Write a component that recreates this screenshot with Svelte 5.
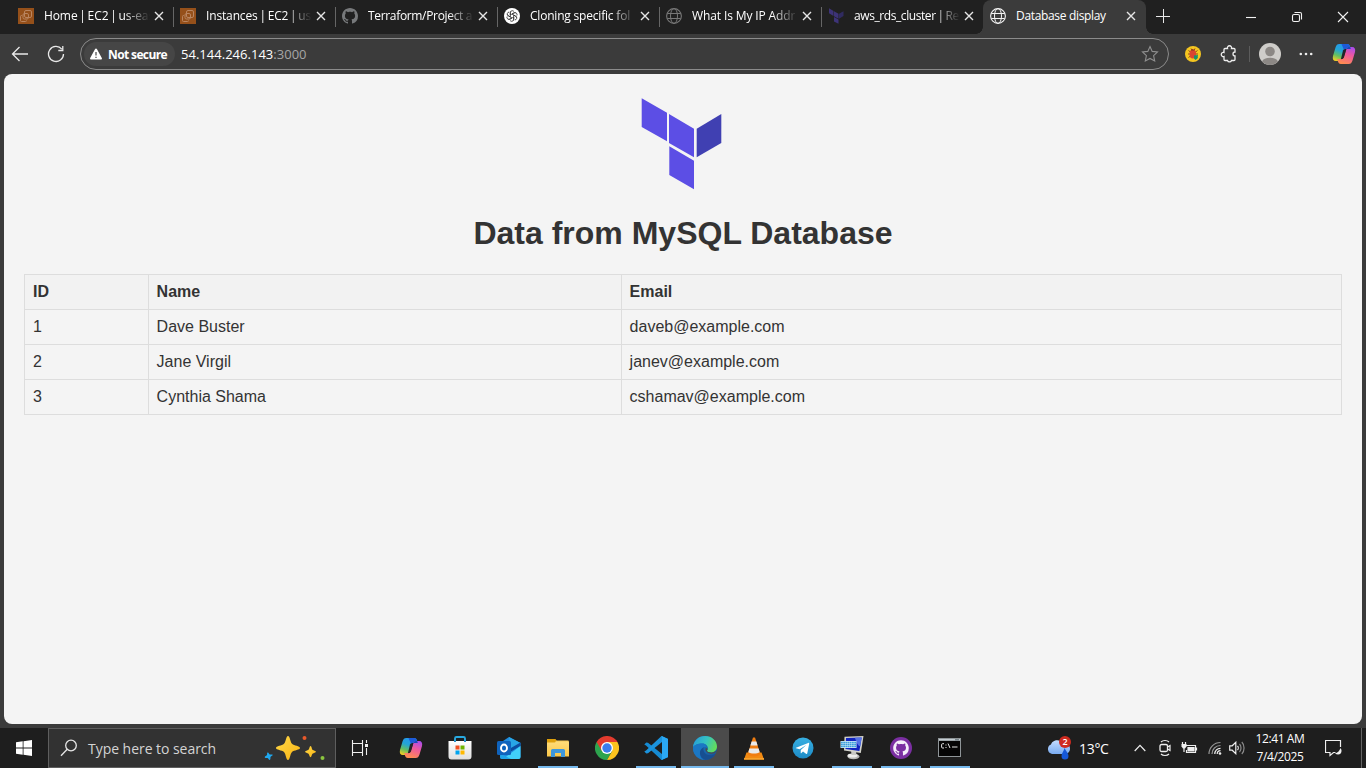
<script>
  const tabs = [
    { icon: 'aws', parts: ['Home', 'EC2', 'us-eas'], spacing: -0.1 },
    { icon: 'aws', parts: ['Instances', 'EC2', 'us-'], spacing: -0.15 },
    { icon: 'github', parts: ['Terraform/Project a'], spacing: -0.33 },
    { icon: 'openai', parts: ['Cloning specific fol'], spacing: -0.2 },
    { icon: 'globe', parts: ['What Is My IP Addr'], spacing: -0.12 },
    { icon: 'terraform', parts: ['aws_rds_cluster', 'Re'], spacing: -0.42 },
    { icon: 'globe', parts: ['Database display'], active: true, spacing: -0.33 }
  ];

  const rows = [
    { id: 1, name: 'Dave Buster', email: 'daveb@example.com' },
    { id: 2, name: 'Jane Virgil', email: 'janev@example.com' },
    { id: 3, name: 'Cynthia Shama', email: 'cshamav@example.com' }
  ];

  const apps = [
    { icon: 'copilot' },
    { icon: 'store' },
    { icon: 'outlook' },
    { icon: 'explorer', open: true },
    { icon: 'chrome' },
    { icon: 'code', open: true },
    { icon: 'edge', open: true, current: true },
    { icon: 'vlc', open: true },
    { icon: 'telegram' },
    { icon: 'remote', open: true },
    { icon: 'githubdesk', open: true },
    { icon: 'terminal', open: true }
  ];

  const octocat =
    'M8 0C3.58 0 0 3.58 0 8c0 3.54 2.29 6.53 5.47 7.59.4.07.55-.17.55-.38 0-.19-.01-.82-.01-1.49-2.01.37-2.53-.49-2.69-.94-.09-.23-.48-.94-.82-1.13-.28-.15-.68-.52-.01-.53.63-.01 1.08.58 1.23.82.72 1.21 1.87.87 2.33.66.07-.52.28-.87.51-1.07-1.78-.2-3.64-.89-3.64-3.95 0-.87.31-1.59.82-2.15-.08-.2-.36-1.02.08-2.12 0 0 .67-.21 2.2.82.64-.18 1.32-.27 2-.27.68 0 1.36.09 2 .27 1.53-1.04 2.2-.82 2.2-.82.44 1.1.16 1.92.08 2.12.51.56.82 1.27.82 2.15 0 3.07-1.87 3.75-3.65 3.95.29.25.54.73.54 1.48 0 1.07-.01 1.93-.01 2.2 0 .21.15.46.55.38A8.013 8.013 0 0016 8c0-4.42-3.58-8-8-8z';
</script>

{#snippet copilot(size)}
  <svg width={size} height={size} viewBox="0 0 24 24">
    <path d="M7.300 2h7.900c1.700 0 2.300 1 2.800 2.500l.8 2.500h-4c-1.700 0-2.300.7-2.800 2.200L9.800 16c-.7 2-1.500 3-3.300 3H4C1.300 19 .3 17 1 14l2.500-8.500C4.300 3 5.300 2 7.300 2z" fill="url(#cpA)" />
    <path d="M9.500 2h5.700c1.700 0 2.300 1 2.800 2.500l.8 2.500h-3.600c-1.500 0-2.300.3-3 1.400z" fill="#1d5bd9" />
    <path d="M16.700 22H8.800c-1.700 0-2.300-1-2.800-2.500L5.200 17h3.600c1.900 0 2.600-.8 3.200-2.500l2.100-6.700C14.800 5.800 15.500 5 17.300 5H20c2.700 0 3.700 2 3 5l-2.500 8.500c-.8 2.500-1.800 3.500-3.800 3.500z" fill="url(#cpB)" />
    <path d="M14.500 6.700C15.500 4.800 16.800 5 18.200 5l.6 2h-4.500z" fill="#174cb8" />
    <path d="M11 8.500c.6-1 1.500-1.500 3.400-1.500L12 15.300c-.5 1.300-1.300 1.900-3.100 1.900z" fill="#222428" />
  </svg>
{/snippet}

{#snippet icon(name)}
  {#if name === 'aws'}
    <svg width="16" height="16" viewBox="0 0 16 16">
      <rect width="16" height="16" fill="#95501a" />
      <g fill="none" stroke="#b98560" stroke-width="1">
        <rect x="6.500" y="2.500" width="7" height="7" rx="1.500" />
        <rect x="5" y="5.500" width="5.500" height="5.500" rx="1.500" />
        <path d="M4 7.500h-.5a1 1 0 0 0-1 1v4a1 1 0 0 0 1 1h4a1 1 0 0 0 1-1" />
      </g>
    </svg>
  {:else if name === 'github'}
    <svg width="16" height="16" viewBox="0 0 16 16"><path d={octocat} fill="#77797b" /></svg>
  {:else if name === 'openai'}
    <svg width="16" height="16" viewBox="0 0 16 16">
      <circle cx="8" cy="8" r="8" fill="#fff" />
      <g fill="none" stroke="#303030" stroke-width=".75">
        {#each [0, 60, 120, 180, 240, 300] as a}
          <path d="M6.300 7V4.700a2 2 0 0 1 3.700-1.100M6.300 7L10 4.900a2 2 0 0 1 1.700 0" transform="rotate({a} 8 8)" />
        {/each}
      </g>
    </svg>
  {:else if name === 'globe'}
    <svg class="globe" width="16" height="16" viewBox="0 0 16 16" fill="none" stroke="currentColor">
      <circle cx="8" cy="8" r="7.400" stroke-width="1.100" />
      <ellipse cx="8" cy="8" rx="3.500" ry="7.400" />
      <path d="M1.300 5.500h13.400M1.300 10.500h13.400" />
    </svg>
  {:else if name === 'terraform'}
    <svg width="16" height="16" viewBox="0 0 16 16" fill="#3d3378">
      <path d="M1 .3l4.500 2.600v5L1 5.300zM6 3.200l4.500 2.600v5L6 8.200zM6 8.900l4.500 2.600v4.300L6 13.500z" />
      <path d="M11 5.800l4.500-2.600v4.900L11 10.700z" fill="#302b60" />
    </svg>
  {:else if name === 'copilot'}
    {@render copilot(24)}
  {:else if name === 'store'}
    <svg width="24" height="24" viewBox="0 0 24 24">
      <path d="M7 5V2.500A1.500 1.500 0 0 1 8.500 1h7A1.500 1.500 0 0 1 17 2.500V5" fill="none" stroke="#28a9e0" stroke-width="1.900" />
      <path d="M.5 5h23v15.500a3 3 0 0 1-3 3h-17a3 3 0 0 1-3-3z" fill="url(#storeG)" />
      <path d="M6.100 5h1.800v1H6.100zM16.100 5h1.800v1h-1.800z" fill="#1683c4" />
      <path d="M7.500 9.500h4V13.500h-4z" fill="#f25022" /><path d="M12.500 9.500h4v4h-4z" fill="#6fb400" />
      <path d="M7.500 14.500h4v4h-4z" fill="#00a4ef" /><path d="M12.500 14.500h4v4h-4z" fill="#ffb900" />
    </svg>
  {:else if name === 'outlook'}
    <svg width="26" height="24" viewBox="0 0 26 24">
      <path d="M4 7L13 1l11.500 6v14a2 2 0 0 1-2 2H6a2 2 0 0 1-2-2z" fill="#1f8ce0" />
      <path d="M13 1l11.500 6L15 13z" fill="#28a6e6" />
      <path d="M24.500 6.500V10L14 16v-3.500z" fill="#0b4da0" />
      <path d="M24.500 10v11a2 2 0 0 1-2 2H7z" fill="#41d0fa" />
      <path d="M5 18l10 5H6a2 2 0 0 1-2-2z" fill="#20a4e8" />
      <rect x="1" y="5" width="14" height="14" rx="1.500" fill="#0f63bd" />
      <ellipse cx="8" cy="12" rx="3" ry="3.500" fill="none" stroke="#fff" stroke-width="1.900" />
    </svg>
  {:else if name === 'explorer'}
    <svg width="24" height="24" viewBox="0 0 24 24">
      <path d="M1 3h8.500l1.500 2H22.500v6H1z" fill="#dfa00c" />
      <path d="M10.500 4.500h12v2h-14z" fill="#f4c653" />
      <path d="M1 6.500h8l1.500-1H23V20.500H1z" fill="url(#folderG)" />
      <path d="M5 21v-6.500a1.500 1.500 0 0 1 1.500-1.500h11a1.500 1.500 0 0 1 1.500 1.500V21h-4v-4H9v4z" fill="#3e97db" />
    </svg>
  {:else if name === 'chrome'}
    <svg width="24" height="24" viewBox="0 0 24 24">
      <path d="M1.600 6A12 12 0 0 1 22.400 6H12z" fill="#e33b2e" />
      <path d="M1.600 6A12 12 0 0 0 12 24l5.200-9L12 12z" fill="#2da44e" />
      <path d="M22.400 6A12 12 0 0 1 12 24l5.200-9L12 6z" fill="#fcc31e" />
      <path d="M1.600 6L6.800 15 12 12V6h10.400L21 4z" fill="#e33b2e" />
      <circle cx="12" cy="12" r="6" fill="#fff" /><circle cx="12" cy="12" r="4.700" fill="#3b7ded" />
    </svg>
  {:else if name === 'code'}
    <svg width="24" height="24" viewBox="0 0 24 24">
      <path d="M17.500 0L24 3v18l-6.500 3L2 9.500l-1.700-1 2-2L4 6.800l14 11.200V6z" fill="#168bd3" />
      <path d="M17.500 24L24 21V3l-6.500-3L2 14.500l-1.700 1 2 2 1.700-.3L18 6v12z" fill="#1b93dd" />
      <path d="M17.500 0L24 3v18l-6.500 3c.3-.3.500-.8.500-1.300V1.300c0-.5-.2-1-.5-1.300z" fill="#2ba8f3" />
    </svg>
  {:else if name === 'edge'}
    <svg width="24" height="24" viewBox="0 0 24 24">
      <circle cx="12" cy="12" r="12" fill="url(#edgeB)" />
      <path d="M0 11.500C.4 4.800 5.500 0 12 0c7 0 12 4.900 12 10.500 0 3.500-2.600 6-6 6-2.300 0-4-.8-4-1.700 0-.6.900-.9.900-2.500 0-2.600-2.200-4.800-5.400-4.800C5 7.500 1 9 0 11.500z" fill="url(#edgeG)" />
      <path d="M9.500 7.500C5 7.500 1 9 0 11.500v1.300C.3 19 5.500 24 12 24c-3.500-.5-5.500-4-5-7.500.4-2.700 1.500-4.500 3.800-5.300.8-.3 2-.3 2.900.3-.4-2.300-1.800-4-4.200-4z" fill="#1b77c4" />
      <path d="M10.800 11.200C8 12.500 6.600 15 7 17.500 7.700 21.500 10.500 24 14 23.800c3.500-.5 6-2.200 7.800-4.700.4-.7-.2-1-.7-.7-4.500 2.300-9.100.1-10.300-3.200-.5-1.300-.5-2.800 0-4z" fill="#174f91" />
      <path d="M13 12c-.8 1-.6 2.500.3 3.600 1.200 1.500 3.200 2.100 5.200 2.100 2 0 4-.9 5.100-3l-1.400.8c-2.700 1.700-8.200.8-8.200-.7 0-.6.500-.9.500-2z" fill="#4b4b4b" />
    </svg>
  {:else if name === 'vlc'}
    <svg width="24" height="24" viewBox="0 0 24 24">
      <path d="M4.500 16.500h15L22 23.500H2z" fill="#f28a12" />
      <path d="M11 1.500h2l5.500 17c-3 2.500-10 2.500-13 0z" fill="#f07d10" />
      <path d="M9.600 5.500h4.800l1.200 4H8.400zM7.400 12.500h9.200l1.100 3.700c-2.500 1.800-8.900 1.800-11.400 0z" fill="#e9e9e9" />
      <path d="M2 22h20v1.700H2z" fill="#f7a12a" />
    </svg>
  {:else if name === 'telegram'}
    <svg width="22" height="22" viewBox="0 0 22 22">
      <circle cx="11" cy="11" r="10.500" fill="url(#tg)" />
      <path d="M4 10.700l12.200-4.800c.7-.2 1.100.2 1 .9l-1.900 9.500c-.2.800-.7.900-1.300.5l-3-2.200-1.600 1.500c-.4.300-.6.300-.7-.3l.1-2.800 5.500-5-6.700 4.300L4.100 11.300c-.5-.2-.5-.4-.1-.6z" fill="#fff" />
    </svg>
  {:else if name === 'remote'}
    <svg width="24" height="24" viewBox="0 0 24 24">
      <ellipse cx="13.500" cy="20.500" rx="6" ry="2.800" fill="#b9b9b7" /><ellipse cx="12.500" cy="19.500" rx="5" ry="2" fill="#ededeb" />
      <path d="M11 14l5 1 .5 4h-5z" fill="#c8c8c4" />
      <path d="M4.500.8L23.500 0 20.800 17 4 14.500z" fill="#d2d2cb" />
      <path d="M6 2l15.700-.6-2.300 13.700L5.500 13z" fill="#1023c0" />
      <path d="M15 1.700l6.700-.3-1.500 8.800C18 10 16 6 15 1.700z" fill="#5573e6" />
      <rect x=".5" y="5" width="16" height="7" fill="#d8ecf9" />
      <path d="M1 6.500h15M1 8.500h15M1 10.500h15" stroke="#3c9fdb" stroke-width="1.500" stroke-dasharray="1.800 .4" />
    </svg>
  {:else if name === 'githubdesk'}
    <svg width="24" height="24" viewBox="0 0 24 24">
      <circle cx="12" cy="12" r="11" fill="#7b2fa2" />
      <g transform="translate(4.200 4.200) scale(.975)"><path d={octocat} fill="#f5eefa" /></g>
    </svg>
  {:else if name === 'terminal'}
    <svg width="24" height="24" viewBox="0 0 24 24">
      <rect x=".5" y="2.500" width="22" height="18" fill="#050505" stroke="#8f9598" />
      <path d="M1 3h21v1.800H1z" fill="#c4cdd2" /><path d="M17 3.300h4v1h-4z" fill="#58666e" />
      <path d="M6 7.700H4.600a1 1 0 0 0-1 1V11a1 1 0 0 0 1 1H6M8 8.500v1M8 11v1M10 7.500l2 4.500M14 11h5.500" fill="none" stroke="#e4e4e4" />
    </svg>
  {/if}
{/snippet}

<svg class="defs" width="0" height="0" aria-hidden="true">
  <defs>
    <linearGradient id="cpA" x1=".6" y1="0" x2=".2" y2="1">
      <stop offset="0" stop-color="#2497f0" /><stop offset=".4" stop-color="#24a5d5" /><stop offset=".7" stop-color="#63bf61" /><stop offset="1" stop-color="#f4cf23" />
    </linearGradient>
    <linearGradient id="cpB" x1=".8" y1="0" x2=".4" y2="1">
      <stop offset="0" stop-color="#a94ced" /><stop offset=".45" stop-color="#ee599e" /><stop offset="1" stop-color="#ff8b51" />
    </linearGradient>
    <linearGradient id="storeG" x1="0" y1="0" x2="0" y2="1"><stop offset="0" stop-color="#fff" /><stop offset="1" stop-color="#dedede" /></linearGradient>
    <linearGradient id="folderG" x1="0" y1="0" x2="0" y2="1"><stop offset="0" stop-color="#ffdc7a" /><stop offset="1" stop-color="#fbc748" /></linearGradient>
    <linearGradient id="edgeG" x1="0" y1=".3" x2="1" y2=".6"><stop offset="0" stop-color="#289ed8" /><stop offset=".5" stop-color="#35c3c1" /><stop offset="1" stop-color="#66de55" /></linearGradient>
    <linearGradient id="edgeB" x1="0" y1="0" x2="1" y2="1"><stop offset="0" stop-color="#1b83d0" /><stop offset="1" stop-color="#174f91" /></linearGradient>
    <linearGradient id="tg" x1="0" y1="0" x2="0" y2="1"><stop offset="0" stop-color="#37afe2" /><stop offset="1" stop-color="#1d8bc6" /></linearGradient>
    <linearGradient id="star" x1="0" y1="0" x2="1" y2="1"><stop offset="0" stop-color="#ffd94a" /><stop offset="1" stop-color="#f8b312" /></linearGradient>
    <linearGradient id="cloud" x1="0" y1="0" x2="0" y2="1"><stop offset="0" stop-color="#c4dcff" /><stop offset="1" stop-color="#79abf1" /></linearGradient>
  </defs>
</svg>

<div class="screen">
  <header class="tabstrip">
    {#each tabs as tab}
      <div class="tab" class:active={tab.active}>
        <span class="fav">{@render icon(tab.icon)}</span>
        <span class="title" class:fade={!tab.active} style="letter-spacing: {tab.spacing}px">{#each tab.parts as part, i}{#if i > 0}<span class="bar">|</span>{/if}{part}{/each}</span>
        <svg class="close" width="10" height="10" viewBox="0 0 10 10"><path d="M1 1l8 8M9 1L1 9" /></svg>
      </div>
    {/each}
    <svg class="plus" width="14" height="14" viewBox="0 0 14 14"><path d="M7.500 0v14M0 7.500h14" /></svg>
    <div class="wincontrols">
      <svg width="12" height="12" viewBox="0 0 12 12"><path d="M1 6.500h10" /></svg>
      <svg width="12" height="12" viewBox="0 0 12 12"><rect x="1.500" y="3.500" width="7" height="7" rx="1.500" /><path d="M3.500 1.500H9A1.500 1.500 0 0 1 10.500 3v5.500" /></svg>
      <svg width="12" height="12" viewBox="0 0 12 12"><path d="M1 1l10 10M11 1L1 11" /></svg>
    </div>
  </header>

  <nav class="toolbar">
    <svg class="back" width="18" height="16" viewBox="0 0 18 16"><path d="M17 8H1.500M8.500 1l-7 7 7 7" /></svg>
    <svg class="reload" width="18" height="18" viewBox="0 0 18 18"><path d="M16.500 9A7.500 7.500 0 1 1 14.800 4.200M15.800 1v4.500h-4.500" /></svg>
    <div class="address">
      <span class="chip">
        <svg width="12" height="12" viewBox="0 0 12 12"><path d="M6 .4c.4 0 .7.200.9.500l4.900 9c.4.700-.1 1.500-.9 1.500H1.100c-.8 0-1.300-.8-.9-1.500l4.900-9C5.300.6 5.600.4 6 .4z" fill="#fff" /><path d="M6 4v3.500M6 8.700v1.200" stroke="#444" stroke-width="1.200" /></svg>
        <b>Not secure</b>
      </span>
      <span class="url">54.144.246.143<i>:3000</i></span>
      <svg class="fave" width="18" height="18" viewBox="0 0 18 18"><path d="M9 1.500l2.200 4.900 5.300.6-3.900 3.600 1.100 5.400L9 13.400 4.300 16l1.100-5.400L1.500 7l5.300-.6z" /></svg>
    </div>
    <svg class="bug" width="16" height="16" viewBox="0 0 16 16">
      <circle cx="8" cy="8" r="8" fill="#f5c620" />
      <path d="M3.500 4.500l9 7M12.500 4.500l-9 7M3 8h10M6 2.500l1 2M10 2.500l-1 2" stroke="#8d4c1b" />
      <ellipse cx="7.800" cy="8" rx="3.300" ry="4.500" fill="#db4431" /><path d="M5.700 4.500h4l-2-1.500z" fill="#7b3522" />
      <path d="M9 9.500l4-.5-.5 3.500L10.500 14 9 12.500z" fill="#15936a" />
    </svg>
    <svg class="puzzle" width="18" height="18" viewBox="0 0 18 18"><path d="M4 4.500a1 1 0 0 1 1-1h2.500a2.100 2.100 0 1 1 4 0H14a1 1 0 0 1 1 1V7a2 2 0 0 0 0 4v3.500a1 1 0 0 1-1 1h-2.500a2.100 2.100 0 0 1-4 0H5a1 1 0 0 1-1-1V11.500a2.100 2.100 0 1 1 0-4z" /></svg>
    <span class="divider"></span>
    <svg class="avatar" width="22" height="22" viewBox="0 0 22 22"><circle cx="11" cy="11" r="11" fill="#cfcdca" /><circle cx="11" cy="8.500" r="4.800" fill="#8c8885" /><path d="M3 18.500C4 15.800 7 14.700 11 14.700s7 1.100 8 3.800a11 11 0 0 1-16 0z" fill="#8c8885" /></svg>
    <svg class="dots" width="14" height="4" viewBox="0 0 14 4" fill="#eee"><circle cx="1.800" cy="2" r="1.300" /><circle cx="7" cy="2" r="1.300" /><circle cx="12.200" cy="2" r="1.300" /></svg>
    <span class="pilot">{@render copilot(24)}</span>
  </nav>

  <main class="page">
    <svg class="logo" width="82" height="92" viewBox="0 0 82 92" fill="#5c4ee5">
      <path d="M.7.300L26 14.700v28.600L.7 29zM28 16l25 14.700v28.600L28 45zM28.300 48.300L53 62.700v28.600L28.300 77z" />
      <path d="M55.700 30.700L80.300 16v29L55.700 59.300z" fill="#4040b2" />
    </svg>
    <h1>Data from MySQL Database</h1>
    <table>
      <thead><tr><th class="c1">ID</th><th class="c2">Name</th><th>Email</th></tr></thead>
      <tbody>
        {#each rows as row}
          <tr><td>{row.id}</td><td>{row.name}</td><td>{row.email}</td></tr>
        {/each}
      </tbody>
    </table>
  </main>

  <footer class="taskbar">
    <div class="start"><svg width="16" height="16" viewBox="0 0 16 16" fill="#fff"><path d="M0 2.300L6.700 1.300v6.300H0zM7.500 1.200L16 0v7.600H7.500zM0 8.400h6.700v6.300L0 13.700zM7.500 8.400H16V16l-8.500-1.200z" /></svg></div>
    <div class="search">
      <svg class="lens" width="18" height="18" viewBox="0 0 18 18"><circle cx="11" cy="6.500" r="5.300" /><path d="M7.200 10.300L1 16.800" /></svg>
      <span>Type here to search</span>
      <svg class="sparkles" width="64" height="28" viewBox="0 0 64 28">
        <path d="M24 2c2 0 2.200 6 4 7.800C30 11.800 36 12 36 14s-6 2-8 4-2 8-4 8-2-6-4-8-8-2-8-4 6-2.200 8-4.200S22 2 24 2z" fill="url(#star)" />
        <path d="M46.500 12c1.200 0 1.100 3 2 3.800s3.500 1 3.500 2-2.500 1-3.500 2-1 3.500-2 3.500-1-2.500-2-3.500-3.500-1-3.500-2 2.500-1 3.500-2 1-3.800 2-3.800z" fill="url(#star)" />
        <path d="M3.500 18.500c1.200-.5 1.500 1.800 2.500 2s2.600-.5 2.700.6c0 1-2 1.200-2.200 2s.2 2.900-.8 2.900-1.400-1.900-2.300-2-2.700.2-2.700-.7 2-1.400 2.300-2.200-.2-2.400.5-2.600z" fill="#20a8f0" />
        <circle cx="40.500" cy="4" r="2" fill="#e9592b" /><circle cx="58.500" cy="24" r="2" fill="#8bc53f" />
      </svg>
    </div>
    <div class="taskview"><svg width="18" height="18" viewBox="0 0 18 18"><path d="M1.500 1v3.500h10V1M1.500 17v-3.500h10V17M1.500 4.500v9M11.500 4.500v9M15.500 1v3M15.500 9v7" /><path d="M14 5h3v3h-3z" fill="#eee" stroke="none" /></svg></div>
    <div class="apps">
      {#each apps as app}
        <div class="app" class:open={app.open} class:current={app.current}>{@render icon(app.icon)}</div>
      {/each}
    </div>
    <div class="tray">
      <div class="weather">
        <svg width="26" height="26" viewBox="0 0 26 26">
          <path d="M6 19a5 5 0 0 1-1-9.500C6 5 14 3 16.500 8.500c4 0 7.500 1 7.500 5S21 19 18.500 19z" fill="url(#cloud)" />
          <path d="M18.500 13c1.500 3 4 5.500 4 8a3.500 3.500 0 0 1-7 0c0-2.500 2-4.500 3-8z" fill="#1558d8" />
        </svg>
        <span class="badge">2</span>
      </div>
      <span class="temp">13°C</span>
      <svg class="chev" width="12" height="8" viewBox="0 0 12 8"><path d="M.7 7L6 1.300 11.300 7" /></svg>
      <svg class="meet" width="14" height="18" viewBox="0 0 14 18"><path d="M3 3c2-2 6-2 8 0M3 15c2 2 6 2 8 0" /><rect x="2" y="5.500" width="7.500" height="7" rx="1.500" stroke-width="1.300" /><path d="M9.500 8l2.500-1.500v5L9.500 10" /></svg>
      <svg class="battery" width="17" height="14" viewBox="0 0 17 14"><path d="M5 4.500h9.500v7h-9V9M15.500 6.500v3" /><path d="M7 6.500h6v3.500H7z" fill="#eee" stroke="#eee" /><path d="M1.500 1v3M4.500 1v3M3 7v4" /><path d="M.5 3h5v2.500L4 7.500H2L.5 5.500z" fill="#eee" stroke="none" /></svg>
      <svg class="wifi" width="14" height="14" viewBox="0 0 14 14"><path d="M1 13C1 6.500 6 1.500 12.500 1.500M4 13c0-4.700 3.500-8.500 8.500-8.500" stroke="#959595" /><path d="M6.800 13c0-3.300 2.400-5.700 5.700-5.700M9.200 13c0-2 1.300-3.300 3.300-3.300" /><circle cx="12" cy="12.500" r="1.300" fill="#eee" stroke="none" /></svg>
      <svg class="volume" width="17" height="14" viewBox="0 0 17 14"><path d="M.7 4.800h2.500L6.800 1.300v11.400L3.200 9.200H.7zM8.500 5c1 1 1 3 0 4" /><path d="M10.500 3c2 2 2 6 0 8M12.800 1c3 3 3 9 0 12" stroke="#8b8b8b" /></svg>
      <div class="clock"><span>12:41 AM</span><span class="date">7/4/2025</span></div>
      <svg class="notice" width="18" height="18" viewBox="0 0 18 18"><path d="M15.500 8V1.500h-15v12h4.500v3l3.500-3h2" /><path d="M15.500 9c-1 3-3 5-5.500 5.500 3 2 7 1 6.500-3.500z" fill="#eee" stroke="none" /></svg>
      <span class="desktop"></span>
    </div>
  </footer>
</div>

<style>
  :global(body) { margin: 0; background: #3b3b3b; overflow: hidden; }
  * { box-sizing: border-box; }
  svg { display: block; flex: none; }
  .defs { position: absolute; }
  .screen { width: 1366px; height: 768px; display: flex; flex-direction: column; background: #3b3b3b; color: #fff; font-family: "Open Sans", "Noto Sans", sans-serif; overflow: hidden; }

  .tabstrip { height: 34px; flex: none; display: flex; align-items: center; padding-left: 12px; background: #202020; }
  .tab { width: 162px; height: 34px; flex: none; display: flex; align-items: center; padding: 0 9px 2px 6px; position: relative; }
  .tab:not(.active)::after { content: ""; position: absolute; right: 0; top: 7px; width: 1px; height: 20px; background: #666; }
  .tab:nth-child(6)::after { display: none; }
  .tab.active { width: 163px; margin-left: -1px; padding-left: 7px; background: #3b3b3b; border-radius: 8px 8px 0 0; }
  .tab.active::before, .tab.active::after { content: ""; position: absolute; bottom: 0; width: 7px; height: 7px; }
  .tab.active::before { left: -7px; background: radial-gradient(circle at 0 0, #202020 6.500px, #3b3b3b 7px); }
  .tab.active::after { right: -7px; background: radial-gradient(circle at 100% 0, #202020 6.500px, #3b3b3b 7px); }
  .fav { width: 16px; color: #777; }
  .active .fav { color: #f2f2f2; }
  .title { margin-left: 10px; font-size: 12px; line-height: 18px; white-space: nowrap; }
  .title.fade { mask-image: linear-gradient(90deg, #000 80px, transparent 106px); }
  .bar { margin: 0 1.800px; }
  .close { margin-left: auto; margin-right: 1px; stroke: #e6e6e6; stroke-width: 1.400; }
  .plus { margin-left: 10px; margin-bottom: 3px; stroke: #e8e8e8; stroke-width: 1; }
  .wincontrols { margin-left: auto; display: flex; gap: 34px; padding-right: 17px; }
  .wincontrols svg { fill: none; stroke: #f2f2f2; stroke-width: 1.100; }

  .toolbar { height: 40px; flex: none; display: flex; align-items: center; padding: 0 10px 0 11px; }
  .back, .reload { fill: none; stroke: #e8e8e8; stroke-width: 1.300; }
  .reload { margin-left: 18px; }
  .address { width: 1089px; height: 32px; margin-left: 15px; border: 1px solid #8b8b8b; border-radius: 16px; display: flex; align-items: center; padding: 0 9px 0 3px; }
  .chip { width: 91px; height: 24px; border-radius: 12px; background: #464646; display: flex; align-items: center; gap: 6px; padding-left: 6px; font-size: 12px; white-space: nowrap; letter-spacing: -.62px; }
  .url { margin-left: 6px; font-size: 13px; letter-spacing: .02px; }
  .url i { font-style: normal; color: #a6a6a6; }
  .fave { margin-left: auto; fill: none; stroke: #8f8f8f; stroke-width: 1.100; }
  .bug { margin-left: 16px; }
  .puzzle { margin-left: 19px; fill: none; stroke: #eee; stroke-width: 1.300; }
  .divider { width: 1px; height: 16px; margin-left: 11px; background: #5c5c5c; }
  .avatar { margin-left: 9px; }
  .dots { margin-left: 18px; }
  .pilot { margin-left: 19px; }

  .page { height: 650px; flex: none; margin: 0 4px 4px; padding: 24px 20px; border-radius: 8px; background: #f4f4f4; color: #333; font-family: "Liberation Sans", Arial, sans-serif; }
  .logo { margin: 0 auto; position: relative; left: -1px; }
  h1 { margin: 25px 0 22px; font-size: 32px; line-height: 37px; text-align: center; }
  table { width: 100%; border-collapse: collapse; table-layout: fixed; font-size: 16px; line-height: 18px; }
  th, td { border: 1px solid #ddd; padding: 8px; text-align: left; height: 35px; }
  th { background: #f2f2f2; }
  .c1 { width: 123.600px; }
  .c2 { width: 473px; }

  .taskbar { height: 40px; flex: none; display: flex; background: #1e1e1e; }
  .start, .taskview { width: 48px; display: flex; align-items: center; justify-content: center; }
  .search { width: 288px; border: 1px solid #5e5e5e; background: #323232; display: flex; align-items: center; padding: 0 7px 0 11px; font-size: 14px; color: #d4d4d4; }
  .search span { margin-left: 10px; white-space: nowrap; letter-spacing: -.04px; }
  .lens { fill: none; stroke: #e6e6e6; stroke-width: 1.300; }
  .sparkles { margin-left: auto; }
  .taskview svg { fill: none; stroke: #eee; stroke-width: 1.100; }
  .apps { display: flex; gap: 1px; margin-left: 3px; }
  .app { width: 48px; height: 40px; display: flex; align-items: center; justify-content: center; position: relative; }
  .app.open::after { content: ""; position: absolute; left: 4px; right: 4px; bottom: 0; height: 2px; background: #76b9ed; }
  .app.current { background: #4b4b4b; }
  .app.current::after { left: 0; right: 0; }
  .tray { margin-left: auto; display: flex; align-items: center; }
  .tray > svg { fill: none; stroke: #eee; stroke-width: 1.200; }
  .weather { position: relative; width: 26px; height: 26px; }
  .badge { position: absolute; left: 13px; top: 1px; width: 12px; height: 12px; border-radius: 6px; background: #cf2b20; font-size: 9px; line-height: 12px; text-align: center; font-weight: 600; }
  .temp { width: 33px; margin-left: 7px; font-size: 14px; white-space: nowrap; letter-spacing: -.3px; }
  .chev { margin-left: 22px; }
  .meet { margin-left: 12px; }
  .battery { margin-left: 9px; }
  .wifi { margin-left: 10px; }
  .volume { margin-left: 7px; }
  .clock { width: 60px; margin-left: 4px; margin-right: 1px; display: flex; flex-direction: column; align-items: center; font-size: 12px; line-height: 18px; white-space: nowrap; letter-spacing: -.4px; }
  .notice { margin-left: 14px; }
  .desktop { width: 1px; height: 40px; margin: 0 4px 0 18px; background: #636363; }
</style>
